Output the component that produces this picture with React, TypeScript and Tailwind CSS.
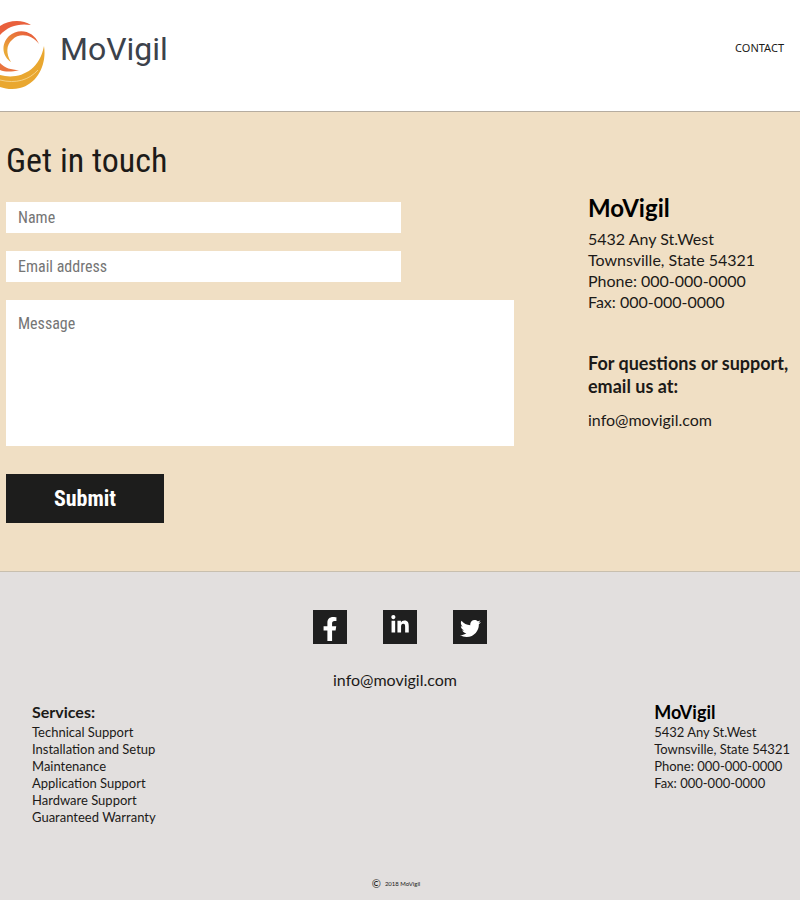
import React from "react";
import { FaFacebookF, FaLinkedinIn, FaTwitter } from "react-icons/fa";

const narrow = "font-['Roboto_Condensed','Liberation_Sans_Narrow',sans-serif]";

const field =
  "mt-[18px] w-full bg-white px-3 text-[16px] outline-none placeholder:text-[#757575]";

const address = [
  "5432 Any St.West",
  "Townsville, State 54321",
  "Phone: 000-000-0000",
  "Fax: 000-000-0000",
];

const services = [
  "Technical Support",
  "Installation and Setup",
  "Maintenance",
  "Application Support",
  "Hardware Support",
  "Guaranteed Warranty",
];

const socials = [
  { name: "Facebook", icon: <FaFacebookF size={24} className="mt-1" /> },
  { name: "LinkedIn", icon: <FaLinkedinIn size={20} className="mb-1" /> },
  { name: "Twitter", icon: <FaTwitter size={21} className="mt-0.5" /> },
];

function Swirl() {
  return (
    <svg width="46" height="72" viewBox="0 19 46 72" aria-hidden="true">
      <defs>
        <linearGradient id="warm" x1="0.6" y1="0" x2="0.2" y2="0.7">
          <stop offset="0" stopColor="#e8613c" />
          <stop offset="1" stopColor="#e9a838" />
        </linearGradient>
      </defs>
      <path d="M0 26 C9 20 22 19 31 25 C19 23 8 26 0 35 Z" fill="#e9603c" />
      <path d="M39 44 C34 31 19 27 9 36 C0 45 3 57 11 62 C6 54 6 45 12 40 C20 32 32 35 39 44 Z" fill="url(#warm)" />
      <path d="M0 63 C5 68 11 70 19 70 C12 72 5 72 0 70 Z" fill="#e9743f" />
      <path d="M44 46 C47 65 37 84 20 88 C13 90 6 89 0 87 V75 C18 80 39 72 44 46 Z" fill="#e9a730" />
      <path d="M0 80 C16 84 29 80 38 70" fill="none" stroke="#f8dc9c" strokeWidth="0.8" />
    </svg>
  );
}

export default function App() {
  return (
    <div className="flex min-h-screen flex-col bg-[#e2dfde] font-[Lato,Carlito,sans-serif] text-[#1c1a18]">
      <header className="flex h-28 items-start justify-between border-b border-[#b5aca0] bg-white pr-4">
        <a href="#home" className="flex items-start gap-3.5 pt-[19px]">
          <Swirl />
          <span className="pt-2.5 font-[Roboto,sans-serif] text-[32px] leading-10 text-[#3c424b]">MoVigil</span>
        </a>
        <nav className="pt-10">
          <a href="#contact" className="block font-['Noto_Sans',sans-serif] text-[11px] leading-4">CONTACT</a>
        </nav>
      </header>

      <main id="contact" className="flex border-b border-[#c8bfae] bg-[#f0dfc4] pb-12">
        <form className={`flex min-w-0 flex-1 flex-col pl-1.5 pt-6 ${narrow}`} onSubmit={(e) => e.preventDefault()}>
          <h1 className="text-[34px] leading-[48px]">Get in touch</h1>
          <input aria-label="Name" placeholder="Name" className={`${field} h-[31px] max-w-[395px]`} />
          <input aria-label="Email address" type="email" placeholder="Email address" className={`${field} h-[31px] max-w-[395px]`} />
          <textarea aria-label="Message" placeholder="Message" className={`${field} h-[146px] max-w-[508px] resize-none py-3 leading-6`} />
          <button type="submit" className="mt-7 h-[49px] w-[158px] bg-[#1d1d1c] text-[22px] font-bold text-white">Submit</button>
        </form>
        <aside className="w-[212px] shrink-0 pt-20">
          <h2 className="text-[24px] font-bold leading-8 text-black">MoVigil</h2>
          <address className="pt-1 text-[16px] not-italic leading-[21px]">
            {address.map((line) => <p key={line}>{line}</p>)}
          </address>
          <h3 className="pt-10 text-[18px] font-bold leading-[23px]">For questions or support,<br />email us at:</h3>
          <a href="mailto:info@movigil.com" className="mt-2.5 block text-[16px] leading-6">info@movigil.com</a>
        </aside>
      </main>

      <footer className="flex flex-1 flex-col pt-[38px]">
        <div className="flex justify-center gap-9">
          {socials.map((s) => (
            <a key={s.name} href="#social" aria-label={s.name} className="flex size-[34px] items-center justify-center bg-[#1f1f1f] text-white">
              {s.icon}
            </a>
          ))}
        </div>
        <a href="mailto:info@movigil.com" className="mt-6 self-center pr-2.5 text-[16px] leading-6">info@movigil.com</a>
        <div className="flex justify-between pl-8 pr-2.5 pt-2">
          <section>
            <h4 className="text-[16px] font-bold leading-6">Services:</h4>
            <ul className="text-[13px] leading-[17px]">
              {services.map((line) => <li key={line}>{line}</li>)}
            </ul>
          </section>
          <section>
            <h4 className="text-[18px] font-bold leading-6 text-black">MoVigil</h4>
            <address className="text-[13px] not-italic leading-[17px]">
              {address.map((line) => <p key={line}>{line}</p>)}
            </address>
          </section>
        </div>
        <p className="mt-auto flex items-center justify-center gap-1 pb-2 pr-2 text-[6px] leading-4">
          <span className="text-[11px]">©</span> 2018 MoVigil
        </p>
      </footer>
    </div>
  );
}
